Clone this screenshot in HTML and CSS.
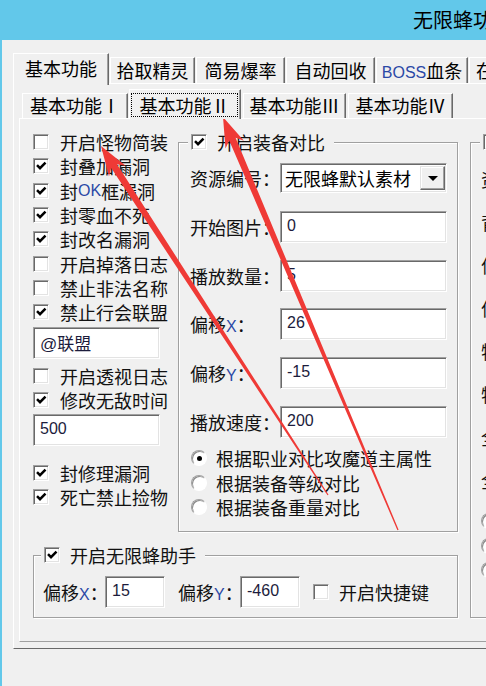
FILE: index.html
```html
<!DOCTYPE html>
<html lang="zh-CN">
<head>
    <meta charset="UTF-8">
    <title>无限蜂</title>
    <link rel="stylesheet" href="styles.css">
</head>
<body>
<svg class="defs" width="0" height="0">
    <symbol id="tick" viewBox="0 0 14 14">
        <path d="M3 6.2 L6 9.2 L11.5 3.6" fill="none" stroke="#000" stroke-width="2.5"/>
    </symbol>
</svg>
<div class="window">
    <div class="titlebar">无限蜂功能设置</div>
    <div class="client">
        <div class="tabs tabs-outer">
            <div class="tab active t1">基本功能</div>
            <div class="tab t2">拾取精灵</div>
            <div class="tab t3">简易爆率</div>
            <div class="tab t4">自动回收</div>
            <div class="tab t5"><span class="lat">BOSS</span>血条</div>
            <div class="tab t6">在线挂机</div>
        </div>
        <div class="panel panel-outer">
            <div class="tabs tabs-inner">
                <div class="tab s1">基本功能Ⅰ</div>
                <div class="tab active s2"><span class="focus">基本功能Ⅱ</span></div>
                <div class="tab s3">基本功能Ⅲ</div>
                <div class="tab s4">基本功能Ⅳ</div>
            </div>
            <div class="panel panel-inner">
                <div class="main">
                    <div class="top">
                        <div class="left-col">
                            <div class="check"><span class="box"></span>开启怪物简装</div>
                            <div class="check"><span class="box"><svg class="tick"><use href="#tick"/></svg></span>封叠加漏洞</div>
                            <div class="check"><span class="box"><svg class="tick"><use href="#tick"/></svg></span>封<span class="lat">OK</span>框漏洞</div>
                            <div class="check"><span class="box"><svg class="tick"><use href="#tick"/></svg></span>封零血不死</div>
                            <div class="check"><span class="box"><svg class="tick"><use href="#tick"/></svg></span>封改名漏洞</div>
                            <div class="check"><span class="box"></span>开启掉落日志</div>
                            <div class="check"><span class="box"></span>禁止非法名称</div>
                            <div class="check"><span class="box"><svg class="tick"><use href="#tick"/></svg></span>禁止行会联盟</div>
                            <input class="field field-left f-guild" type="text" value="@联盟">
                            <div class="check c-view"><span class="box"></span>开启透视日志</div>
                            <div class="check"><span class="box"><svg class="tick"><use href="#tick"/></svg></span>修改无敌时间</div>
                            <input class="field field-left f-time" type="text" value="500">
                            <div class="check c-repair"><span class="box"><svg class="tick"><use href="#tick"/></svg></span>封修理漏洞</div>
                            <div class="check"><span class="box"><svg class="tick"><use href="#tick"/></svg></span>死亡禁止捡物</div>
                        </div>

                        <fieldset class="group group-mid">
                            <legend><span class="check"><span class="box"><svg class="tick"><use href="#tick"/></svg></span>开启装备对比</span></legend>
                            <div class="form">
                                <div class="form-row">
                                    <span class="label">资源编号：</span>
                                    <div class="combo">
                                        <span class="combo-text">无限蜂默认素材</span>
                                        <span class="combo-btn"><span class="arrow-down"></span></span>
                                    </div>
                                </div>
                                <div class="form-row">
                                    <span class="label">开始图片：</span>
                                    <input class="field field-mid" type="text" value="0">
                                </div>
                                <div class="form-row">
                                    <span class="label">播放数量：</span>
                                    <input class="field field-mid" type="text" value="5">
                                </div>
                                <div class="form-row">
                                    <span class="label">偏移<span class="lat">X</span>：</span>
                                    <input class="field field-mid" type="text" value="26">
                                </div>
                                <div class="form-row">
                                    <span class="label">偏移<span class="lat">Y</span>：</span>
                                    <input class="field field-mid" type="text" value="-15">
                                </div>
                                <div class="form-row">
                                    <span class="label">播放速度：</span>
                                    <input class="field field-mid" type="text" value="200">
                                </div>
                            </div>
                            <div class="radios">
                                <div class="check"><span class="radio on"></span>根据职业对比攻魔道主属性</div>
                                <div class="check"><span class="radio"></span>根据装备等级对比</div>
                                <div class="check"><span class="radio"></span>根据装备重量对比</div>
                            </div>
                        </fieldset>
                    </div>

                    <fieldset class="group group-helper">
                        <legend><span class="check"><span class="box"><svg class="tick"><use href="#tick"/></svg></span>开启无限蜂助手</span></legend>
                        <div class="helper-row">
                            <span class="label-sm">偏移<span class="lat">X</span>：</span>
                            <input class="field field-sm" type="text" value="15">
                            <span class="label-sm gap">偏移<span class="lat">Y</span>：</span>
                            <input class="field field-sm" type="text" value="-460">
                            <span class="check gap"><span class="box"></span>开启快捷键</span>
                        </div>
                    </fieldset>
                </div>

                <fieldset class="group group-right">
                    <legend><span class="check"><span class="box"></span>开启特效显示</span></legend>
                    <div class="right-rows">
                        <div class="right-row">资源编号：</div>
                        <div class="right-row">背景图片：</div>
                        <div class="right-row">偏移<span class="lat">X</span>：</div>
                        <div class="right-row">偏移<span class="lat">Y</span>：</div>
                        <div class="right-row">特效数量：</div>
                        <div class="right-row">特效速度：</div>
                        <div class="right-row">全屏显示</div>
                        <div class="right-row">全屏特效</div>
                    </div>
                    <div class="radios radios-right">
                        <div class="check"><span class="radio"></span>显示一</div>
                        <div class="check"><span class="radio"></span>显示二</div>
                        <div class="check"><span class="radio"></span>显示三</div>
                    </div>
                </fieldset>
            </div>
        </div>
    </div>

    <svg class="arrows" width="486" height="686" viewBox="0 0 486 686">
        <polygon fill="#ef3a36" points="223,117 243.9,140.7 235.6,137.7 398.6,529.8 397.4,530.2 229.2,140.5 225.5,148.5"/>
        <polygon fill="#ef3a36" points="101,146 125.7,165.7 117,164.2 328.5,494.7 327.5,495.3 111.2,168 109,176.6"/>
    </svg>
</div>
</body>
</html>
```

FILE: styles.css
```css
* {
    box-sizing: border-box;
}

html, body {
    background: #f0f0f0;
}

body {
    margin: 0;
    width: 486px;
    height: 686px;
    overflow: hidden;
    font-family: "Noto Sans CJK SC", "Noto Sans", sans-serif;
    font-size: 18px;
    color: #111;
}

.defs {
    position: absolute;
}

.window {
    position: relative;
    width: 486px;
    height: 686px;
    overflow: hidden;
    background: #f0f0f0;
    border-left: 2px solid #62c8ea;
}

.titlebar {
    height: 40px;
    background: #62c8ea;
    padding-left: 411px;
    font-size: 20px;
    line-height: 40px;
    color: #000;
    white-space: nowrap;
    overflow: hidden;
}

.client {
    padding: 13px 0 0 11px;
}

.lat {
    font-family: "Liberation Sans", sans-serif;
    font-size: 16px;
    color: #2b48a6;
}

/* tabs */
.tabs {
    display: flex;
    align-items: flex-end;
    white-space: nowrap;
}

.tabs-outer {
    height: 30px;
}

.tab {
    flex: none;
    height: 26px;
    margin-left: 1px;
    border-top: 1px solid #fff;
    border-left: 1px solid #fff;
    border-right: 1px solid #696969;
    box-shadow: inset -1px 0 #a0a0a0;
    text-align: center;
    line-height: 24px;
    color: #000;
}

.tab.active {
    position: relative;
    z-index: 1;
    height: 32px;
    margin-bottom: -2px;
    background: #f0f0f0;
    line-height: 28px;
}

.t1 { width: 96px; margin-left: 0; }
.t2 { width: 85px; }
.t3 { width: 89px; }
.t4 { width: 89px; }
.t5 { width: 92px; }
.t6 { width: 90px; text-align: left; padding-left: 6px; }

.panel {
    border-top: 1px solid #fff;
    border-left: 1px solid #fff;
}

.panel-outer {
    width: 620px;
    height: 566px;
    padding: 6px 0 0 5px;
    border-bottom: 1px solid #696969;
}

.tabs-inner {
    height: 28px;
    padding-left: 3px;
}

.tabs-inner .tab {
    height: 25px;
    line-height: 23px;
}

.tabs-inner .tab.active {
    height: 30px;
    margin-bottom: -1px;
    line-height: 26px;
    padding: 3px 2px 0 1px;
}

.s1 { width: 106px; margin-left: 0; }
.s2 { width: 112px; }
.s3 { width: 103px; margin-left: 2px; }
.s4 { width: 105px; margin-left: 2px; }

.focus {
    display: block;
    height: 24px;
    line-height: 22px;
    border: 1px dotted #000;
}

.panel-inner {
    display: flex;
    align-items: flex-start;
    width: 600px;
    height: 524px;
    border-bottom: 1px solid #a0a0a0;
}

.main {
    width: 438px;
    padding-left: 13px;
}

.top {
    display: flex;
    align-items: flex-start;
}

/* left column */
.left-col {
    width: 145px;
    padding-top: 11px;
}

.check {
    display: flex;
    align-items: center;
    height: 24.3px;
    white-space: nowrap;
    color: #111;
}

.box {
    flex: none;
    width: 16px;
    height: 16px;
    margin-right: 11px;
    background: #fff;
    border: 1px solid;
    border-color: #a0a0a0 #fff #fff #a0a0a0;
    box-shadow: inset 1px 1px 0 #696969, inset -1px -1px 0 #e3e3e3;
}

.tick {
    display: block;
    width: 14px;
    height: 14px;
}

.radio {
    flex: none;
    display: flex;
    align-items: center;
    justify-content: center;
    width: 16px;
    height: 16px;
    margin-right: 9px;
    border-radius: 50%;
    background: #fff;
    border: 1px solid;
    border-color: #a0a0a0 #fff #fff #a0a0a0;
    box-shadow: inset 1px 1px 0 #8a8a8a;
}

.radio.on::after {
    content: "";
    width: 5px;
    height: 5px;
    border-radius: 50%;
    background: #000;
}

.field {
    display: block;
    margin: 0;
    height: 32px;
    padding: 0 0 2px 6px;
    background: #fff;
    border: 1px solid;
    border-color: #a0a0a0 #fff #fff #a0a0a0;
    box-shadow: inset 1px 1px 0 #696969, inset -1px -1px 0 #e3e3e3;
    font-family: "Liberation Sans", "Noto Sans CJK SC", sans-serif;
    font-size: 16px;
    color: #1c1c3c;
    outline: none;
}

.field-left {
    width: 127px;
}

.f-guild {
    margin-top: 3px;
    font-size: 17px;
}

.c-view {
    margin-top: 4px;
}

.f-time {
    margin-top: 2px;
}

.c-repair {
    margin-top: 15px;
}

/* group boxes */
.group {
    margin: 0;
    padding: 0;
    min-width: 0;
    border: 1px solid #a0a0a0;
    box-shadow: inset 1px 1px 0 #fff, 1px 1px 0 #fff;
}

.group legend {
    height: 24px;
    background: #f0f0f0;
    padding: 0 9px 0 3px;
}

.group legend .check {
    height: 24px;
}

.group legend .box {
    margin-right: 10px;
}

.group-mid {
    width: 280px;
    height: 402px;
    margin-top: 11px;
}

.group-mid legend {
    margin-left: 9px;
}

.form {
    display: flex;
    flex-direction: column;
    gap: 16.75px;
    padding: 8px 0 0 11px;
}

.form-row {
    display: flex;
    align-items: center;
    height: 32px;
}

.label {
    width: 90px;
    white-space: nowrap;
}

.field-mid {
    width: 167px;
}

.combo {
    display: flex;
    align-items: center;
    width: 167px;
    height: 30px;
    background: #fff;
    border: 1px solid;
    border-color: #a0a0a0 #fff #fff #a0a0a0;
    box-shadow: inset 1px 1px 0 #696969, inset -1px -1px 0 #e3e3e3;
}

.combo-text {
    flex: 1;
    padding-left: 4px;
    white-space: nowrap;
    overflow: hidden;
    color: #000;
}

.combo-btn {
    display: flex;
    align-items: center;
    justify-content: center;
    width: 25px;
    height: 24px;
    margin-right: 1px;
    background: #f0f0f0;
    border: 1px solid;
    border-color: #e3e3e3 #696969 #696969 #e3e3e3;
    box-shadow: inset -1px -1px 0 #a0a0a0, inset 1px 1px 0 #fff;
}

.arrow-down {
    width: 0;
    height: 0;
    border-left: 5px solid transparent;
    border-right: 5px solid transparent;
    border-top: 5px solid #000;
}

.radios {
    margin-top: 8px;
    padding-left: 12px;
}

.radios .check {
    height: 24.5px;
}

.group-helper {
    width: 425px;
    height: 75px;
    margin-top: 11px;
}

.group-helper legend {
    margin-left: 7px;
}

.helper-row {
    display: flex;
    align-items: center;
    margin-top: 9px;
    padding-left: 9px;
}

.label-sm {
    width: 62px;
    white-space: nowrap;
}

.label-sm.gap,
.helper-row .check.gap {
    margin-left: 13px;
}

.helper-row .box {
    margin-right: 10px;
}

.field-sm {
    width: 60px;
}

.group-right {
    width: 200px;
    height: 488px;
    margin: 11px 0 0 12px;
}

.group-right legend {
    margin-left: 9px;
}

.right-rows {
    padding: 4px 0 0 10px;
}

.right-row {
    height: 43px;
    line-height: 43px;
    white-space: nowrap;
}

.radios-right {
    margin-top: 7px;
    padding-left: 10px;
}

/* red arrows drawn over the dialog */
.arrows {
    position: absolute;
    top: 0;
    left: -2px;
    pointer-events: none;
}
```
